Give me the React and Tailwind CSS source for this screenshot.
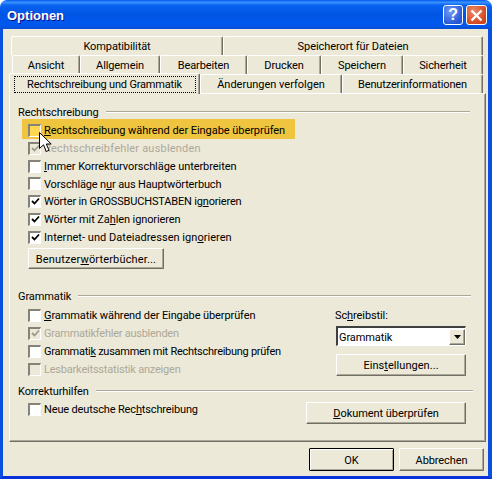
const bevel = "border border-t-white border-l-white border-r-[#716f64] border-b-[#716f64] shadow-[inset_-1px_-1px_0_#aca899]";

function Tab({ width, children, selected, t = "" }) {
  if (selected) {
    return (
      <div className={`relative z-10 h-[21px] -mt-px flex items-center justify-center rounded-t-[2px] border-t border-l border-r border-t-white border-l-white border-r-[#716f64] bg-[#ece9d8] shadow-[inset_-1px_0_0_#aca899] ${width}`}>
        <span className={`whitespace-nowrap border border-dotted border-black h-[17px] leading-[16px] w-[182px] text-center ${t}`}>{children}</span>
      </div>
    );
  }
  return (
    <div className={`h-[19px] whitespace-nowrap flex items-center justify-center rounded-t-[2px] border-t border-l border-r border-t-white border-l-white border-r-[#716f64] bg-[#ece9d8] shadow-[inset_-1px_0_0_#aca899] ${width}`}>
      <span className={`pt-[2px] ${t}`}>{children}</span>
    </div>
  );
}

function Box({ checked, disabled, hot }) {
  let bg = "bg-white";
  if (disabled) bg = "bg-[#ece9d8]";
  if (hot) bg = "bg-[#ffd84f]";
  return (
    <span className={`w-[13px] h-[13px] shrink-0 flex items-center justify-center border-t-2 border-l-2 border-r border-b border-t-[#858378] border-l-[#858378] border-r-white border-b-white ${bg}`}>
      {checked && (
        <svg width="9" height="9" viewBox="0 0 9 9">
          <path d="M1 4 L3.5 6.5 L8 1.5" fill="none" stroke={disabled ? "#9d9a8c" : "#000"} strokeWidth="1.8" />
        </svg>
      )}
    </span>
  );
}

function Check({ children, checked, disabled, h = "h-[18px]", t = "" }) {
  return (
    <div className={`flex items-center pl-[10px] gap-[3px] whitespace-nowrap ${h} ${disabled ? "text-[#aca899]" : ""}`}>
      <Box checked={checked} disabled={disabled} />
      <span className={`pt-[2px] ${t}`}>{children}</span>
    </div>
  );
}

function GroupLine({ label, right }) {
  return (
    <div className={`flex items-center gap-[7px] h-[14px] ${right}`}>
      <span className="pt-[2px]">{label}</span>
      <div className="flex-1 h-[2px] border-t border-t-[#aca899] border-b border-b-white"></div>
    </div>
  );
}

function Btn({ children, width, t = "" }) {
  return (
    <div className={`flex items-center justify-center whitespace-nowrap bg-[#ece9d8] rounded-[1px] ${bevel} ${width}`}>
      <span className={`pt-[2px] ${t}`}>{children}</span>
    </div>
  );
}

export default function App() {
  return (
    <div className="relative w-[492px] h-[479px] flex flex-col text-[11px] leading-[14px] tracking-[-0.1px] text-black [font-family:'Roboto',sans-serif] overflow-hidden">
      {/* title bar */}
      <div className="h-[29px] shrink-0 rounded-t-[7px] flex items-center pl-[7px] pr-[5px] bg-[linear-gradient(to_bottom,#0058ee_0%,#3a93ff_8%,#0a62f0_18%,#0055e5_50%,#0058ee_85%,#0b4fd4_100%)]">
        <span className="flex-1 pt-[3px] text-white font-bold text-[13px] tracking-normal [font-family:'Liberation_Sans',sans-serif] [text-shadow:1px_1px_0_#0f1089]">Optionen</span>
        <div className="w-[20px] h-[20px] mr-[3px] mt-px flex items-center justify-center rounded-[3px] border border-white bg-[radial-gradient(circle_at_35%_30%,#6f9cf5,#2456d6_75%)] text-white font-bold text-[16px] [font-family:'Liberation_Sans',sans-serif]">?</div>
        <div className="w-[21px] h-[20px] mt-px flex items-center justify-center rounded-[3px] border border-white bg-[radial-gradient(circle_at_35%_30%,#ee8a68,#d2441c_75%)]">
          <svg width="13" height="13" viewBox="0 0 13 13">
            <path d="M1.5 1.5 L11.5 11.5 M11.5 1.5 L1.5 11.5" stroke="#fff" strokeWidth="2.4" />
          </svg>
        </div>
      </div>

      {/* dialog body */}
      <div className="flex-1 flex flex-col bg-[#ece9d8] border-l-[3px] border-r-[4px] border-b-[3px] border-l-[#0a50e0] border-r-[#0a50e0] border-b-[#0831d9] pl-[6px] pr-[2px] pt-[7px]">
        {/* tabs */}
        <div className="flex pl-[2px] pr-[3px]">
          <Tab width="w-[212px]">Kompatibilität</Tab>
          <Tab width="flex-1" t="tracking-[-0.08px]">Speicherort für Dateien</Tab>
        </div>
        <div className="flex pl-[3px] pr-[3px] h-[19px]">
          <Tab width="w-[68px]">Ansicht</Tab>
          <Tab width="w-[80px]">Allgemein</Tab>
          <Tab width="w-[87px]">Bearbeiten</Tab>
          <Tab width="w-[74px]">Drucken</Tab>
          <Tab width="w-[82px]">Speichern</Tab>
          <Tab width="flex-1">Sicherheit</Tab>
        </div>
        <div className="flex pr-[3px] h-[19px] items-start">
          <Tab width="w-[191px]" selected t="tracking-[-0.18px]">Rechtschreibung und Grammatik</Tab>
          <Tab width="w-[142px]" t="tracking-normal">Änderungen verfolgen</Tab>
          <Tab width="flex-1" t="tracking-[-0.15px]">Benutzerinformationen</Tab>
        </div>

        {/* panel */}
        <div className={`h-[349px] shrink-0 pl-[8px] pt-[11px] ${bevel}`}>
          <GroupLine label="Rechtschreibung" right="mr-[15px]" />
          <div className="ml-[4px] h-[20px] pl-[6px] w-[273px] bg-[#efc53f] flex items-center gap-[3px] whitespace-nowrap">
            <span className="mt-[2px]"><Box hot /></span>
            <span className="pt-[4px] tracking-[-0.05px]"><u>R</u>echtschreibung während der Eingabe überprüfen</span>
          </div>
          <Check checked disabled t="tracking-[0.2px]">Rechtschreibfehler ausblenden</Check>
          <Check t="tracking-[-0.07px]"><u>I</u>mmer Korrekturvorschläge unterbreiten</Check>
          <Check h="h-[17px]" t="tracking-[-0.14px]">Vorschläge n<u>u</u>r aus Hauptwörterbuch</Check>
          <Check checked t="tracking-[-0.17px]">Wörter in GROSSBUCHSTABEN ig<u>n</u>orieren</Check>
          <Check checked>Wörter mit Za<u>h</u>len ignorieren</Check>
          <Check checked t="tracking-[0.03px]">Internet- und Dateiadressen ign<u>o</u>rieren</Check>
          <Btn width="w-[136px] h-[21px] ml-[10px] mt-[2px]" t="tracking-[0.15px]">Benutzer<u>w</u>örterbücher...</Btn>

          <div className="mt-[20px]">
            <GroupLine label="Grammatik" right="mr-[14px]" />
          </div>
          <div className="flex mt-[3px]">
            <div className="w-[317px]">
              <Check><u>G</u>rammatik während der Eingabe überprüfen</Check>
              <Check checked disabled t="tracking-[-0.25px]">Grammatikfehler ausblenden</Check>
              <Check t="tracking-[-0.27px]">Grammati<u>k</u> zusammen mit Rechtschreibung prüfen</Check>
              <Check disabled t="tracking-[-0.2px]">Lesbarkeitsstatistik anzeigen</Check>
            </div>
            <div className="flex flex-col">
              <div className="h-[18px] flex items-center"><span className="pt-[2px]">Sc<u>h</u>reibstil:</span></div>
              <div className="ml-px mt-[2px] w-[130px] h-[20px] flex items-center bg-white border-t-2 border-l-2 border-r border-b border-t-[#404040] border-l-[#404040] border-r-white border-b-white">
                <span className="flex-1 pl-px pt-[2px]">Grammatik</span>
                <div className={`w-[16px] h-[16px] flex items-center justify-center bg-[#ece9d8] ${bevel}`}>
                  <svg width="7" height="4" viewBox="0 0 7 4"><path d="M0 0 H7 L3.5 4 Z" fill="#000" /></svg>
                </div>
              </div>
              <Btn width="ml-px mt-[8px] w-[130px] h-[22px]" t="tracking-[0.05px]">Eins<u>t</u>ellungen...</Btn>
            </div>
          </div>

          <div className="mt-[6px]">
            <GroupLine label="Korrekturhilfen" right="mr-[12px]" />
          </div>
          <div className="flex mt-[2px]">
            <div className="w-[288px]">
              <Check t="tracking-[-0.15px]">Neue deutsche Rec<u>h</u>tschreibung</Check>
            </div>
            <Btn width="mt-[2px] w-[160px] h-[22px]" t="tracking-[-0.05px]"><u>D</u>okument überprüfen</Btn>
          </div>
        </div>

        {/* footer buttons */}
        <div className="flex justify-end gap-[5px] pr-[2px] pt-[6px]">
          <div className="w-[85px] h-[23px] flex items-center justify-center border border-black rounded-[1px] shadow-[inset_1px_1px_0_#fff,inset_-1px_-1px_0_#aca899]"><span className="pt-[2px]">OK</span></div>
          <Btn width="w-[85px] h-[23px]">Abbrechen</Btn>
        </div>
      </div>

      {/* mouse pointer */}
      <svg className="absolute left-[39px] top-[132px]" width="14" height="22" viewBox="0 0 14 22">
        <path d="M0.5 0.5 V16.5 L4.5 12.8 L7.3 19.5 L10 18.3 L7.3 12 H12.2 Z" fill="#fff" stroke="#000" strokeWidth="1" />
      </svg>
    </div>
  );
}
